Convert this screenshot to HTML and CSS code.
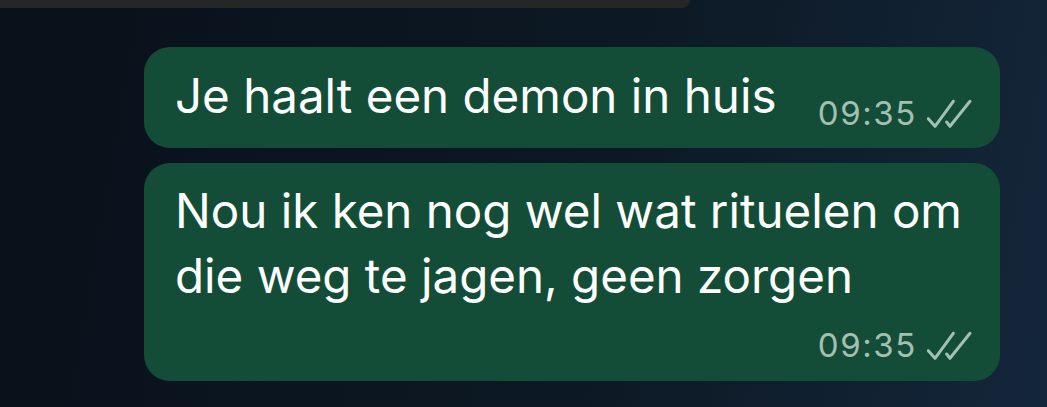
FILE: index.html
```html
<!DOCTYPE html>
<html lang="nl">
<head>
  <meta charset="UTF-8" />
  <meta name="viewport" content="width=device-width, initial-scale=1.0"/>
  <title>Chat</title>
  <link rel="stylesheet" href="styles.css">
</head>
<body>
  <div class="topbar"></div>

  <div class="chat">
    <div class="bubble single">
      <div class="text">Je haalt een demon in huis</div>
      <div class="meta">
        <span class="time">09:35</span>
        <svg class="ticks" width="46" height="30" viewBox="0 0 46 30">
          <path d="M1.3 20.7 L8 28.3 L26.3 3.3" />
          <path d="M19.7 24 L23 28.3 L43 3.3" />
        </svg>
      </div>
    </div>

    <div class="bubble">
      <div class="text">Nou ik ken nog wel wat rituelen om<br>die weg te jagen, geen zorgen</div>
      <div class="meta">
        <span class="time">09:35</span>
        <svg class="ticks" width="46" height="30" viewBox="0 0 46 30">
          <path d="M1.3 20.7 L8 28.3 L26.3 3.3" />
          <path d="M19.7 24 L23 28.3 L43 3.3" />
        </svg>
      </div>
    </div>
  </div>
</body>
</html>
```

FILE: styles.css
```css
body {
  font-family: Inter, "Noto Sans", sans-serif;
  background: linear-gradient(100deg, #09111a 0%, #0c1823 55%, #14263a 100%);
  margin: 0;
  padding: 0;
  height: 407px;
  overflow: hidden;
}
.topbar {
  width: 690px;
  height: 8px;
  background: #262626;
  border-bottom-right-radius: 16px;
}
.chat {
  display: flex;
  flex-direction: column;
  gap: 15px;
  padding: 39px 47px 0 144px;
}
.bubble {
  background: #144d37;
  border-radius: 26px;
  padding: 15px 27px 16px 31px;
  color: #ffffff;
  display: flex;
  flex-direction: column;
}
.bubble.single {
  flex-direction: row;
  justify-content: space-between;
  align-items: flex-end;
  padding-top: 16px;
  padding-bottom: 15px;
}
.text {
  font-size: 47.5px;
  line-height: 65px;
}
.bubble.single .text {
  margin-bottom: 5px;
}
.meta {
  display: flex;
  align-items: center;
  justify-content: flex-end;
  gap: 10px;
  color: #a3c0b2;
  height: 40px;
}
.bubble:not(.single) .meta {
  margin-top: 17px;
}
.time {
  font-size: 33px;
  line-height: 40px;
  letter-spacing: 1.6px;
}
.ticks path {
  fill: none;
  stroke: #a3c0b2;
  stroke-width: 3;
  stroke-linecap: round;
  stroke-linejoin: round;
}
```
